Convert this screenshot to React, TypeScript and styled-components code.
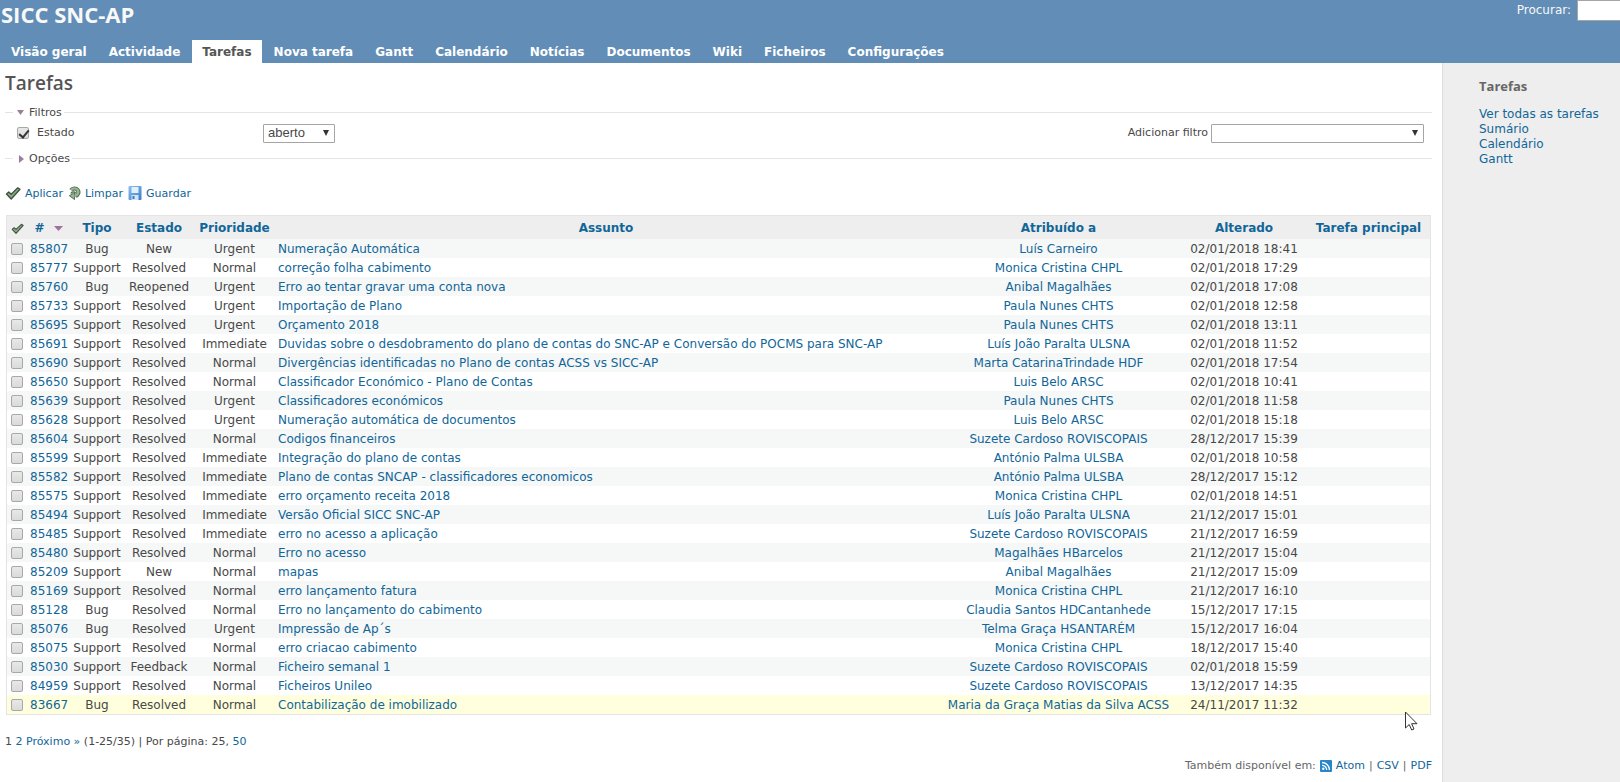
import React from "react";
import styled, { createGlobalStyle } from "styled-components";

const LINK = "#116699";
const LINE = "#e4e4e4";
const BODY_FONT = `"DejaVu Sans", Verdana, sans-serif`;
const HEAD_FONT = `"Open Sans", "Trebuchet MS", sans-serif`;

const GlobalStyle = createGlobalStyle`
  * { box-sizing: border-box; }
  body { margin: 0; background: #fff; color: #484848; font: 12px/15px ${BODY_FONT}; }
  a { color: ${LINK}; text-decoration: none; }
  a:hover { color: #c61a1a; text-decoration: underline; }
`;

const Page = styled.div`
  display: flex;
  flex-direction: column;
  min-height: 100vh;
`;

const Header = styled.header`
  display: flex;
  flex-direction: column;
  justify-content: space-between;
  height: 63px;
  background: #628db6;
  color: #f8f8f8;
`;

const HeaderTop = styled.div`
  display: flex;
  justify-content: space-between;
  align-items: flex-start;
`;

const ProjectTitle = styled.h1`
  margin: 0;
  padding-left: 1px;
  font: 700 22px/28px ${HEAD_FONT};
`;

const Search = styled.form`
  display: flex;
  align-items: flex-start;
  gap: 6px;
  line-height: 21px;
`;

const SearchInput = styled.input`
  width: 43px;
  height: 21px;
  padding: 2px;
  border: 1px solid #a5a5a5;
  border-right: 0;
  background: #fff;
`;

const Tabs = styled.nav`
  display: flex;
  gap: 2px;
  padding-left: 1px;
`;

const Tab = styled.a<{ $selected?: boolean }>`
  padding: 5px 10px 3px;
  font-weight: bold;
  white-space: nowrap;
  color: ${(p) => (p.$selected ? "#555" : "#fff")};
  background: ${(p) => (p.$selected ? "#fff" : "transparent")};
`;

const Columns = styled.div`
  display: flex;
  flex: 1;
`;

const Content = styled.main`
  flex: 1;
  min-width: 0;
  padding: 6px 10px 0 5px;
`;

const Sidebar = styled.aside`
  flex: 0 0 178px;
  padding: 13px 0 0 36px;
  border-left: 1px solid #ddd;
  background: #eee;
`;

const PageTitle = styled.h2`
  margin: 0 0 8px;
  font: 600 19px/28px ${HEAD_FONT};
  color: #555;
`;

const SideTitle = styled.h3`
  margin: 0 0 10px;
  font: 700 13px/21px ${HEAD_FONT};
  color: #666;
`;

const SideLinks = styled.nav`
  display: flex;
  flex-direction: column;
  white-space: nowrap;
`;

const Group = styled.fieldset`
  margin: 0;
  padding: 0 8px;
  border: 0;
  border-top: 1px solid ${LINE};
  font-size: 11px;
`;

const Legend = styled.legend`
  padding: 0 2px 0 4px;
`;

const LegendButton = styled.button`
  display: flex;
  align-items: center;
  gap: 5px;
  padding: 0;
  border: 0;
  background: none;
  color: inherit;
  font: inherit;
`;

const FilterRow = styled.div`
  display: flex;
  align-items: center;
  height: 31px;
  padding: 0 0 5px 4px;
`;

const FilterName = styled.label`
  display: flex;
  align-items: center;
  gap: 8px;
  width: 246px;
`;

const AddFilter = styled.label`
  display: flex;
  align-items: center;
  gap: 3px;
  margin-left: auto;
`;

const FilterText = styled.span`
  padding-bottom: 2px;
`;

const SelectBox = styled.span<{ $width: number }>`
  position: relative;
  display: flex;
  width: ${(p) => p.$width}px;
  &::after {
    content: "";
    position: absolute;
    right: 6px;
    top: 6px;
    border: 3px solid transparent;
    border-top: 6px solid #333;
    border-bottom: 0;
    pointer-events: none;
  }
`;

const Select = styled.select`
  appearance: none;
  width: 100%;
  height: 19px;
  padding: 0 4px;
  border: 1px solid #a5a5a5;
  border-radius: 1px;
  background: #fff;
  color: #484848;
  font: 13px/16px "Liberation Sans", Arial, sans-serif;
`;

const Check = styled.input.attrs({ type: "checkbox" })`
  appearance: none;
  position: relative;
  display: block;
  flex: none;
  width: 12px;
  height: 12px;
  margin: 0;
  border: 1px solid #a8a8a8;
  border-radius: 2px;
  background: linear-gradient(#e8e8e8, #dadada);
  &:checked::after {
    content: "";
    position: absolute;
    left: 3px;
    top: 0;
    width: 4px;
    height: 8px;
    border: solid #333;
    border-width: 0 2px 2px 0;
    transform: rotate(40deg);
  }
`;

const Actions = styled.div`
  display: flex;
  align-items: center;
  gap: 5px;
  margin: 19px 0 14px;
  font-size: 11px;
`;

const Action = styled.a`
  display: flex;
  align-items: center;
  gap: 4px;
`;

const TableWrap = styled.div`
  position: relative;
  margin: 0 1px;
  border: 1px solid ${LINE};
`;

const Table = styled.table`
  width: 100%;
  table-layout: fixed;
  border-collapse: collapse;
`;

const Col = styled.col<{ $width?: number }>`
  width: ${(p) => (p.$width ? `${p.$width}px` : "auto")};
`;

const Th = styled.th`
  height: 23px;
  padding: 2px 2px 0;
  background: #eee;
  white-space: nowrap;
`;

const SortLink = styled.a`
  display: flex;
  align-items: center;
  justify-content: center;
  gap: 9px;
`;

const Row = styled.tr<{ $active: boolean }>`
  height: 19px;
  background: ${(p) => (p.$active ? "#ffffdd" : "#fff")};
  &:nth-child(odd) {
    background: ${(p) => (p.$active ? "#ffffdd" : "#f6f7f7")};
  }
`;

const Td = styled.td<{ $left?: boolean }>`
  padding: 2px 2px 0;
  text-align: ${(p) => (p.$left ? "left" : "center")};
  white-space: nowrap;
`;

const CheckCell = styled(Td)`
  padding: 0 2px 0 4px;
`;

const Pagination = styled.p`
  margin: 19px 0 9px;
  font-size: 11px;
`;

const Formats = styled.p`
  display: flex;
  justify-content: flex-end;
  align-items: center;
  gap: 4px;
  margin: 0;
  font-size: 11px;
  color: #666;
`;

const Pointer = styled.svg`
  position: absolute;
  right: 11px;
  bottom: -18px;
`;

const Tick = ({ size = 16 }: { size?: number }) => (
  <svg width={size} height={size} viewBox="0 0 16 16" aria-hidden="true">
    <path d="M1.500 9l2.300-2 2.400 2.200 6.600-6.400 2.200 1.400L6.200 14z" fill="#86ad83" stroke="#3f4f3f" strokeWidth="1.300" strokeLinejoin="round" />
  </svg>
);

const Reload = () => (
  <svg width="13" height="16" viewBox="0 0 14 16" aria-hidden="true">
    <path d="M3.300 5A4.300 4 0 1 1 8 11" fill="none" stroke="#566656" strokeWidth="4.400" />
    <path d="M3 8.500C4 6.500 7 6 8.300 8" fill="none" stroke="#566656" strokeWidth="1.400" />
    <path d="M7 7.500v7.500L1.500 11z" fill="#8fb98c" stroke="#566656" strokeLinejoin="round" />
    <path d="M3.300 4.800A4.300 4 0 1 1 7 11" fill="none" stroke="#93ba90" strokeWidth="2.600" />
  </svg>
);

const Disk = () => (
  <svg width="14" height="14" viewBox="0 0 13 14" aria-hidden="true">
    <defs>
      <linearGradient id="disk" x1="0" y1="0" x2="1" y2="1">
        <stop offset="0" stopColor="#8cc0ee" />
        <stop offset="1" stopColor="#3b7cc8" />
      </linearGradient>
    </defs>
    <rect width="13" height="14" rx="1" fill="url(#disk)" />
    <rect x="3" y="1" width="7" height="6" fill="#e2f0fb" />
    <rect x="3" y="9" width="7" height="5" fill="#d4e4f4" />
    <rect x="4" y="10" width="2" height="3" fill="#3b7cc8" />
  </svg>
);

const Feed = () => (
  <svg width="12" height="12" viewBox="0 0 12 12" aria-hidden="true">
    <rect width="12" height="12" rx="1" fill="#2a86c8" />
    <circle cx="3.300" cy="8.700" r="1.200" fill="#fff" />
    <path d="M2 5.300a4.700 4.700 0 0 1 4.700 4.700M2 2.500A7.500 7.500 0 0 1 9.500 10" fill="none" stroke="#fff" strokeWidth="1.300" />
  </svg>
);

const ArrowDown = ({ color = "#9a7f9a", width = 7 }: { color?: string; width?: number }) => (
  <svg width={width} height="5" viewBox="0 0 8 5" preserveAspectRatio="none" aria-hidden="true">
    <path d="M0 0h8L4 5z" fill={color} />
  </svg>
);

const ArrowRight = () => (
  <svg width="7" height="8" viewBox="0 0 7 8" aria-hidden="true">
    <path d="M2 0l5 4-5 4z" fill="#9a7f9a" />
  </svg>
);

const tabs = ["Visão geral", "Actividade", "Tarefas", "Nova tarefa", "Gantt", "Calendário", "Notícias", "Documentos", "Wiki", "Ficheiros", "Configurações"];
const headings = ["Tipo", "Estado", "Prioridade", "Assunto", "Atribuído a", "Alterado", "Tarefa principal"];
const widths = [21, 41, 56, 68, 83, undefined, 245, 126, 123];

type Issue = [string, string, string, string, string, string, string];

const issues: Issue[] = [
  ["85807", "Bug", "New", "Urgent", "Numeração Automática", "Luís Carneiro", "02/01/2018 18:41"],
  ["85777", "Support", "Resolved", "Normal", "correção folha cabimento", "Monica Cristina CHPL", "02/01/2018 17:29"],
  ["85760", "Bug", "Reopened", "Urgent", "Erro ao tentar gravar uma conta nova", "Anibal Magalhães", "02/01/2018 17:08"],
  ["85733", "Support", "Resolved", "Urgent", "Importação de Plano", "Paula Nunes CHTS", "02/01/2018 12:58"],
  ["85695", "Support", "Resolved", "Urgent", "Orçamento 2018", "Paula Nunes CHTS", "02/01/2018 13:11"],
  ["85691", "Support", "Resolved", "Immediate", "Duvidas sobre o desdobramento do plano de contas do SNC-AP e Conversão do POCMS para SNC-AP", "Luís João Paralta ULSNA", "02/01/2018 11:52"],
  ["85690", "Support", "Resolved", "Normal", "Divergências identificadas no Plano de contas ACSS vs SICC-AP", "Marta CatarinaTrindade HDF", "02/01/2018 17:54"],
  ["85650", "Support", "Resolved", "Normal", "Classificador Económico - Plano de Contas", "Luis Belo ARSC", "02/01/2018 10:41"],
  ["85639", "Support", "Resolved", "Urgent", "Classificadores económicos", "Paula Nunes CHTS", "02/01/2018 11:58"],
  ["85628", "Support", "Resolved", "Urgent", "Numeração automática de documentos", "Luis Belo ARSC", "02/01/2018 15:18"],
  ["85604", "Support", "Resolved", "Normal", "Codigos financeiros", "Suzete Cardoso ROVISCOPAIS", "28/12/2017 15:39"],
  ["85599", "Support", "Resolved", "Immediate", "Integração do plano de contas", "António Palma ULSBA", "02/01/2018 10:58"],
  ["85582", "Support", "Resolved", "Immediate", "Plano de contas SNCAP - classificadores economicos", "António Palma ULSBA", "28/12/2017 15:12"],
  ["85575", "Support", "Resolved", "Immediate", "erro orçamento receita 2018", "Monica Cristina CHPL", "02/01/2018 14:51"],
  ["85494", "Support", "Resolved", "Immediate", "Versão Oficial SICC SNC-AP", "Luís João Paralta ULSNA", "21/12/2017 15:01"],
  ["85485", "Support", "Resolved", "Immediate", "erro no acesso a aplicação", "Suzete Cardoso ROVISCOPAIS", "21/12/2017 16:59"],
  ["85480", "Support", "Resolved", "Normal", "Erro no acesso", "Magalhães HBarcelos", "21/12/2017 15:04"],
  ["85209", "Support", "New", "Normal", "mapas", "Anibal Magalhães", "21/12/2017 15:09"],
  ["85169", "Support", "Resolved", "Normal", "erro lançamento fatura", "Monica Cristina CHPL", "21/12/2017 16:10"],
  ["85128", "Bug", "Resolved", "Normal", "Erro no lançamento do cabimento", "Claudia Santos HDCantanhede", "15/12/2017 17:15"],
  ["85076", "Bug", "Resolved", "Urgent", "Impressão de Ap´s", "Telma Graça HSANTARÉM", "15/12/2017 16:04"],
  ["85075", "Support", "Resolved", "Normal", "erro criacao cabimento", "Monica Cristina CHPL", "18/12/2017 15:40"],
  ["85030", "Support", "Feedback", "Normal", "Ficheiro semanal 1", "Suzete Cardoso ROVISCOPAIS", "02/01/2018 15:59"],
  ["84959", "Support", "Resolved", "Normal", "Ficheiros Unileo", "Suzete Cardoso ROVISCOPAIS", "13/12/2017 14:35"],
  ["83667", "Bug", "Resolved", "Normal", "Contabilização de imobilizado", "Maria da Graça Matias da Silva ACSS", "24/11/2017 11:32"],
];

export default function App() {
  return (
    <Page>
      <GlobalStyle />
      <Header>
        <HeaderTop>
          <ProjectTitle>SICC SNC-AP</ProjectTitle>
          <Search>
            <label htmlFor="q">Procurar:</label>
            <SearchInput id="q" type="text" />
          </Search>
        </HeaderTop>
        <Tabs>
          {tabs.map((t) => (
            <Tab key={t} href="#" $selected={t === "Tarefas"}>{t}</Tab>
          ))}
        </Tabs>
      </Header>
      <Columns>
        <Content>
          <PageTitle>Tarefas</PageTitle>
          <Group>
            <Legend><LegendButton type="button"><ArrowDown />Filtros</LegendButton></Legend>
            <FilterRow>
              <FilterName><Check defaultChecked /><FilterText>Estado</FilterText></FilterName>
              <SelectBox $width={72}>
                <Select aria-label="Estado"><option>aberto</option></Select>
              </SelectBox>
              <AddFilter>
                <FilterText>Adicionar filtro</FilterText>
                <SelectBox $width={213}><Select><option></option></Select></SelectBox>
              </AddFilter>
            </FilterRow>
          </Group>
          <Group>
            <Legend><LegendButton type="button"><ArrowRight />Opções</LegendButton></Legend>
          </Group>
          <Actions>
            <Action href="#"><Tick />Aplicar</Action>
            <Action href="#"><Reload />Limpar</Action>
            <Action href="#"><Disk />Guardar</Action>
          </Actions>
          <TableWrap>
            <Table>
              <colgroup>{widths.map((w, i) => <Col key={i} $width={w} />)}</colgroup>
              <thead>
                <tr>
                  <Th><SortLink href="#" aria-label="Seleccionar tudo"><Tick size={13} /></SortLink></Th>
                  <Th><SortLink href="#">#<ArrowDown color="#a070a0" width={9} /></SortLink></Th>
                  {headings.map((h) => <Th key={h}><SortLink href="#">{h}</SortLink></Th>)}
                </tr>
              </thead>
              <tbody>
                {issues.map(([id, type, status, priority, subject, assignee, updated]) => (
                  <Row key={id} $active={id === "83667"}>
                    <CheckCell><Check aria-label={id} /></CheckCell>
                    <Td><a href="#">{id}</a></Td>
                    <Td>{type}</Td>
                    <Td>{status}</Td>
                    <Td>{priority}</Td>
                    <Td $left><a href="#">{subject}</a></Td>
                    <Td><a href="#">{assignee}</a></Td>
                    <Td>{updated}</Td>
                    <Td />
                  </Row>
                ))}
              </tbody>
            </Table>
            <Pointer width="14" height="21" viewBox="0 0 14 21" aria-hidden="true">
              <path d="M.5 1v16l3.700-3.500 2.500 5.500 2.300-1-2.400-5.300H12z" fill="#fff" stroke="#333" />
            </Pointer>
          </TableWrap>
          <Pagination>
            1 <a href="#">2</a> <a href="#">Próximo »</a> (1-25/35) | Por página: 25, <a href="#">50</a>
          </Pagination>
          <Formats>
            Também disponível em: <Feed /><a href="#">Atom</a> | <a href="#">CSV</a> | <a href="#">PDF</a>
          </Formats>
        </Content>
        <Sidebar>
          <SideTitle>Tarefas</SideTitle>
          <SideLinks>
            <a href="#">Ver todas as tarefas</a>
            <a href="#">Sumário</a>
            <a href="#">Calendário</a>
            <a href="#">Gantt</a>
          </SideLinks>
        </Sidebar>
      </Columns>
    </Page>
  );
}
